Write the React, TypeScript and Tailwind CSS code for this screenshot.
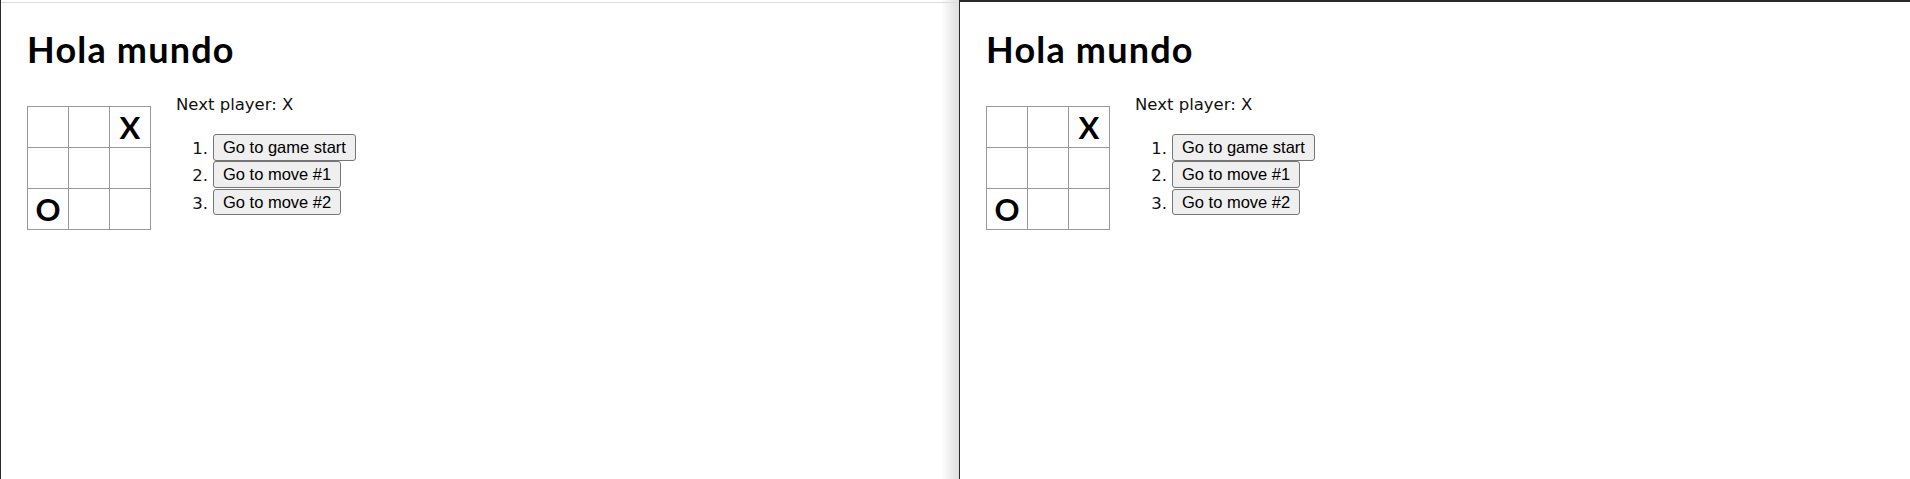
import React from 'react';

const squares: (string | null)[] = [null, null, 'X', null, null, null, 'O', null, null];
const moves = ['Go to game start', 'Go to move #1', 'Go to move #2'];

// One tic-tac-toe frame (the page shows two identical copies side by side)
const Game: React.FC = () => {
    return (
        <div className="pl-[26px] font-['Lato','Noto_Sans',sans-serif] text-[#111]">
            <h1 className="text-[36px] font-bold leading-[44px] tracking-[1.2px] text-black">Hola mundo</h1>

            <div className="mt-[23px] flex items-start">
                {/* Board */}
                <div className="mt-[12px] grid grid-cols-[repeat(3,41px)] grid-rows-[repeat(3,41px)] pr-px pb-px">
                    {squares.map((s, i) => (
                        <button
                            key={i}
                            className="-mb-px -mr-px flex h-[42px] w-[42px] items-center justify-center border border-[#999] bg-white p-0 text-[31px] font-bold leading-none text-black"
                        >
                            {s}
                        </button>
                    ))}
                </div>

                {/* Info */}
                <div className="ml-[25px] font-['DejaVu_Sans',sans-serif]">
                    <div className="pt-px text-[16.5px] leading-[20px]">Next player: X</div>
                    <ol className="mt-[19px]">
                        {moves.map((m, i) => (
                            <li key={m} className="flex h-[27.3px] items-start">
                                <span className="w-[32px] pt-[5px] text-right text-[16.5px] leading-[20px]">{i + 1}.</span>
                                <button className="ml-[5px] h-[26.5px] rounded-[3px] border border-[#767676] bg-[#efefef] px-[9px] font-['Liberation_Sans',Arial,sans-serif] text-[16.5px] leading-none text-black">
                                    {m}
                                </button>
                            </li>
                        ))}
                    </ol>
                </div>
            </div>
        </div>
    );
};

export default function App() {
    return (
        <div className="flex h-[479px] w-[1910px] overflow-hidden bg-white">
            {/* Left frame */}
            <div className="relative h-full w-[959px] border-l border-[#2b2b2b]">
                <div className="mt-[2px] h-full border-t border-[#dcdcdc] pt-[24px]">
                    <Game />
                </div>
                <div className="pointer-events-none absolute top-0 right-0 h-full w-[18px] bg-linear-to-r from-white/0 to-[#dedede]" />
            </div>

            {/* Right frame */}
            <div className="h-full flex-1 border-t-2 border-l border-[#2b2b2b] pt-[25px]">
                <Game />
            </div>
        </div>
    );
}
